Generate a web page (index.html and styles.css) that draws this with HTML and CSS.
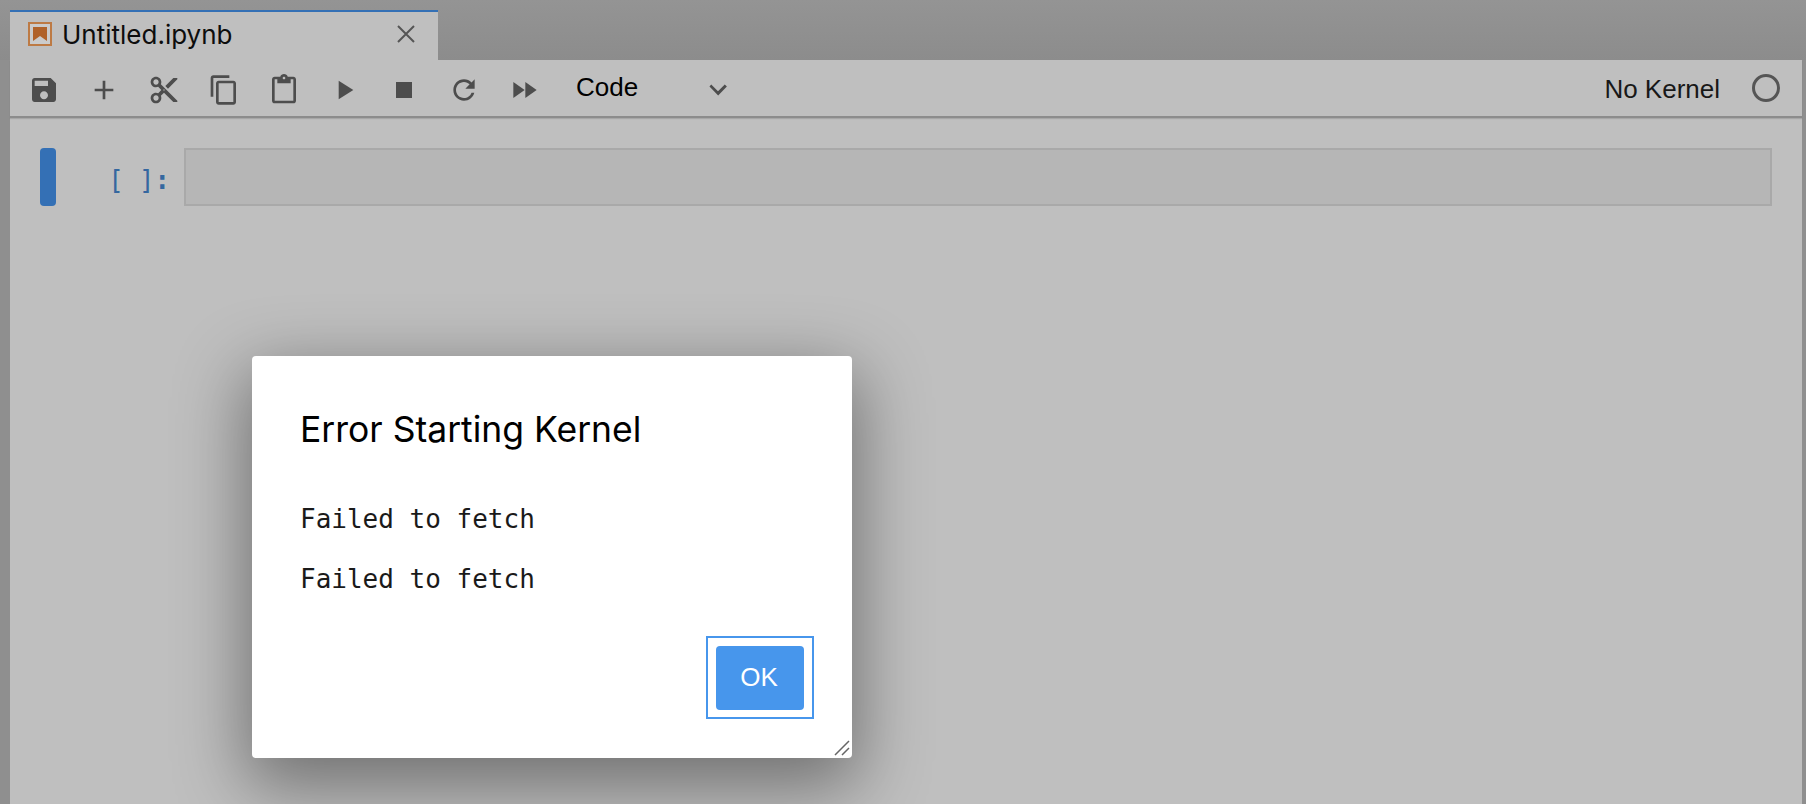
FILE: index.html
```html
<!DOCTYPE html>
<html>
<head>
	<meta charset="utf-8">
	<title>Untitled.ipynb</title>
	<link rel="stylesheet" href="styles.css">
</head>
<body>
	<div class="app">
		<div class="tabbar">
			<div class="tab">
				<svg class="nb-icon" viewBox="0 0 24 24"><path class="nb-ring" d="M1 1h22v22H1z"/><path class="nb-fill" d="M5 5h14v14l-7-5-7 5z"/></svg>
				<span class="tab-label">Untitled.ipynb</span>
				<svg class="tab-close" viewBox="0 0 18 18"><path d="M1 1l16 16M17 1L1 17"/></svg>
			</div>
		</div>

		<div class="toolbar">
			<button class="tool" type="button"><svg viewBox="0 0 24 24"><path d="M17 3H5c-1.11 0-2 .9-2 2v14c0 1.1.89 2 2 2h14c1.1 0 2-.9 2-2V7l-4-4zm-5 16c-1.66 0-3-1.34-3-3s1.34-3 3-3 3 1.34 3 3-1.34 3-3 3zm3-10H5V5h10v4z"/></svg></button>
			<button class="tool" type="button"><svg viewBox="0 0 24 24"><path d="M19 13h-6v6h-2v-6H5v-2h6V5h2v6h6v2z"/></svg></button>
			<button class="tool" type="button"><svg viewBox="0 0 24 24"><path d="M9.64 7.64c.23-.5.36-1.05.36-1.64 0-2.21-1.79-4-4-4S2 3.79 2 6s1.79 4 4 4c.59 0 1.14-.13 1.64-.36L10 12l-2.36 2.36C7.14 14.13 6.59 14 6 14c-2.21 0-4 1.79-4 4s1.79 4 4 4 4-1.79 4-4c0-.59-.13-1.14-.36-1.64L12 14l7 7h3v-1L9.64 7.64zM6 8c-1.1 0-2-.89-2-2s.9-2 2-2 2 .89 2 2-.9 2-2 2zm0 12c-1.1 0-2-.89-2-2s.9-2 2-2 2 .89 2 2-.9 2-2 2zm6-7.5c-.28 0-.5-.22-.5-.5s.22-.5.5-.5.5.22.5.5-.22.5-.5.5zM19 3l-6 6 2 2 7-7V3h-3z"/></svg></button>
			<button class="tool" type="button"><svg viewBox="0 0 24 24"><path d="M16 1H4c-1.1 0-2 .9-2 2v14h2V3h12V1zm3 4H8c-1.1 0-2 .9-2 2v14c0 1.1.9 2 2 2h11c1.1 0 2-.9 2-2V7c0-1.1-.9-2-2-2zm0 16H8V7h11v14z"/></svg></button>
			<button class="tool" type="button"><svg viewBox="0 0 24 24"><path d="M19 2h-4.18C14.4.84 13.3 0 12 0c-1.3 0-2.4.84-2.82 2H5c-1.1 0-2 .9-2 2v16c0 1.1.9 2 2 2h14c1.1 0 2-.9 2-2V4c0-1.1-.9-2-2-2zm-7 0c.55 0 1 .45 1 1s-.45 1-1 1-1-.45-1-1 .45-1 1-1zm7 18H5V4h2v3h10V4h2v16z"/></svg></button>
			<button class="tool" type="button"><svg viewBox="0 0 24 24"><path d="M8 5v14l11-7z"/></svg></button>
			<button class="tool" type="button"><svg viewBox="0 0 24 24"><path d="M6 6h12v12H6z"/></svg></button>
			<button class="tool" type="button"><svg viewBox="0 0 24 24"><path d="M17.65 6.35C16.2 4.9 14.21 4 12 4c-4.42 0-7.99 3.58-7.99 8s3.57 8 7.99 8c3.73 0 6.84-2.55 7.73-6h-2.08c-.82 2.33-3.04 4-5.65 4-3.31 0-6-2.69-6-6s2.69-6 6-6c1.66 0 3.14.69 4.22 1.78L13 11h7V4l-2.35 2.35z"/></svg></button>
			<button class="tool" type="button"><svg viewBox="0 0 24 24"><path d="M4 18l8.5-6L4 6v12zm9-12v12l8.5-6L13 6z"/></svg></button>
			<div class="celltype">
				<span>Code</span>
				<svg viewBox="0 0 18 18"><path d="M5.2 5.9L9 9.7l3.8-3.8 1.2 1.2-4.9 5-4.9-5z"/></svg>
			</div>
			<div class="kernel">
				<span>No Kernel</span>
				<div class="kernel-status"></div>
			</div>
		</div>

		<div class="notebook">
			<div class="cell">
				<div class="collapser"></div>
				<div class="prompt">[ ]<b>:</b></div>
				<div class="editor"></div>
			</div>
		</div>
	</div>

	<!-- Error dialog -->
	<div class="dialog">
		<div class="dialog-title">Error Starting Kernel</div>
		<div class="dialog-msg">Failed to fetch</div>
		<div class="dialog-msg">Failed to fetch</div>
		<div class="dialog-foot">
			<div class="btn-ring">
				<button class="btn-ok" type="button">OK</button>
			</div>
		</div>
		<svg class="dialog-resize" viewBox="0 0 16 16"><path d="M1 15L15 1M8 15l7-7"/></svg>
	</div>
</body>
</html>
```

FILE: styles.css
```css
:root {
	--page: #bfbfbf;
	--strip: #8f8f8f;
	--icon: #4d4d4d;
	--blue: #3470b5;
	--ok-blue: #4796ec;
	--sans: "Liberation Sans", Arial, sans-serif;
	--mono: "DejaVu Sans Mono", monospace;
}

html, body {
	height: 100%;
	margin: 0;
}

body {
	background: var(--strip);
	font-family: var(--sans);
	overflow: hidden;
	padding: 0 4px 0 10px;
	box-sizing: border-box;
}

.app {
	display: flex;
	flex-direction: column;
	height: 100%;
}

.tabbar {
	background: linear-gradient(#949494, #8c8c8c);
	height: 60px;
	margin: 0 -4px 0 -10px;
	padding: 10px 4px 0 10px;
	box-sizing: border-box;
	flex: none;
}

.tab {
	align-items: center;
	background: var(--page);
	border-top: 2px solid var(--blue);
	box-sizing: border-box;
	display: flex;
	height: 50px;
	padding: 0 23px 4px 18px;
	width: 428px;
}

.nb-icon {
	height: 24px;
	width: 24px;
	flex: none;
}

.nb-ring {
	fill: #cbcbcb;
	stroke: #bd7a44;
	stroke-width: 2;
}

.nb-fill {
	fill: #b0622a;
}

.tab-label {
	color: #0d0d0d;
	flex: 1;
	font-family: "Inter", var(--sans);
	font-size: 26px;
	margin-left: 10px;
}

.tab-close {
	fill: none;
	height: 18px;
	stroke: #555;
	stroke-width: 2;
	width: 18px;
}

.toolbar {
	align-items: center;
	background: var(--page);
	border-bottom: 2px solid #8c8c8c;
	box-shadow: 0 1px 1px rgba(0, 0, 0, .12);
	box-sizing: border-box;
	display: flex;
	flex: none;
	height: 58px;
	padding: 4px 22px 0 4px;
	position: relative;
}

.tool {
	background: none;
	border: none;
	display: flex;
	justify-content: center;
	padding: 0;
	width: 60px;
}

.tool svg {
	fill: var(--icon);
	height: 32px;
	width: 32px;
}

.celltype {
	align-items: center;
	display: flex;
	margin-left: 22px;
	width: 158px;
	justify-content: space-between;
}

.celltype span {
	color: #000;
	font-size: 26px;
	margin-top: -5px;
}

.celltype svg {
	fill: var(--icon);
	height: 32px;
	width: 32px;
}

.kernel {
	align-items: center;
	display: flex;
	margin-left: auto;
}

.kernel span {
	color: #181818;
	font-size: 26px;
	margin: -2px -1px 0 0;
}

.kernel-status {
	border: 3px solid #555;
	border-radius: 50%;
	box-sizing: border-box;
	height: 28px;
	margin: -4px 0 0 33px;
	width: 28px;
}

.notebook {
	background: var(--page);
	flex: 1;
	padding: 30px 30px 0 30px;
}

.cell {
	display: flex;
	height: 58px;
}

.collapser {
	background: var(--blue);
	border-radius: 4px;
	flex: none;
	width: 16px;
}

.prompt {
	color: #35679f;
	flex: none;
	font-family: var(--mono);
	font-size: 25.7px;
	line-height: 58px;
	padding-top: 3px;
	text-align: right;
	width: 114px;
	box-sizing: border-box;
}

.editor {
	background: #b6b6b6;
	border: 2px solid #a9a9a9;
	box-sizing: border-box;
	flex: 1;
	margin-left: 14px;
}

.dialog {
	background: #fff;
	border-radius: 4px;
	box-shadow: 0 22px 70px 6px rgba(0, 0, 0, .42);
	box-sizing: border-box;
	height: 402px;
	left: 252px;
	padding: 52px 46px 0 48px;
	position: absolute;
	top: 356px;
	width: 600px;
}

.dialog-title {
	color: #000;
	font-family: "Inter", var(--sans);
	font-size: 35.5px;
	line-height: 44px;
	margin-bottom: 49px;
}

.dialog-msg {
	color: #1a1a1a;
	font-family: var(--mono);
	font-size: 26px;
	line-height: 36px;
	margin-bottom: 24px;
}

.dialog-foot {
	display: flex;
	justify-content: flex-end;
	margin: 39px -8px 0 0;
}

.btn-ring {
	border: 2px solid var(--ok-blue);
	padding: 8px;
	height: 83px;
	box-sizing: border-box;
}

.btn-ok {
	background: var(--ok-blue);
	border: none;
	border-radius: 4px;
	color: #fff;
	display: block;
	font-family: var(--sans);
	font-size: 26px;
	height: 64px;
	padding: 0 2px 2px 0;
	width: 88px;
}

.dialog-resize {
	bottom: 2px;
	fill: none;
	height: 16px;
	position: absolute;
	right: 2px;
	stroke: #666;
	stroke-width: 1.5;
	width: 16px;
}
```
